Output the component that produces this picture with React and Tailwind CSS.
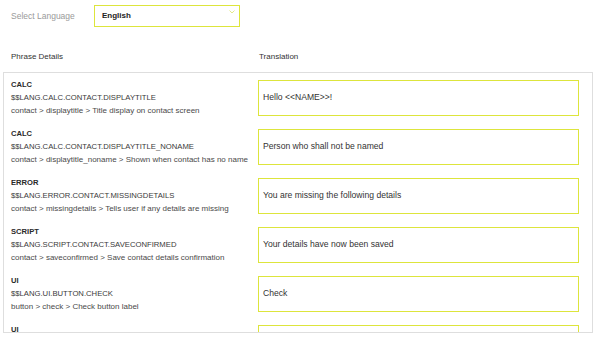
import React from "react";

const phrases = [
  {
    group: "CALC",
    key: "$$LANG.CALC.CONTACT.DISPLAYTITLE",
    path: "contact > displaytitle > Title display on contact screen",
    value: "Hello <<NAME>>!",
  },
  {
    group: "CALC",
    key: "$$LANG.CALC.CONTACT.DISPLAYTITLE_NONAME",
    path: "contact > displaytitle_noname > Shown when contact has no name",
    value: "Person who shall not be named",
  },
  {
    group: "ERROR",
    key: "$$LANG.ERROR.CONTACT.MISSINGDETAILS",
    path: "contact > missingdetails > Tells user if any details are missing",
    value: "You are missing the following details",
  },
  {
    group: "SCRIPT",
    key: "$$LANG.SCRIPT.CONTACT.SAVECONFIRMED",
    path: "contact > saveconfirmed > Save contact details confirmation",
    value: "Your details have now been saved",
  },
  {
    group: "UI",
    key: "$$LANG.UI.BUTTON.CHECK",
    path: "button > check > Check button label",
    value: "Check",
  },
  // last row is cut off by the scroll box, only its label shows
  { group: "UI", key: "", path: "", value: "" },
];

function PhraseRow({ p }) {
  return (
    <div className="flex h-[49px] items-center">
      <div className="w-[247px] leading-[13px]">
        <div className="text-[7.6px] font-bold text-[#2a2a2a]">{p.group}</div>
        <div className="h-[13px] text-[7.7px] text-[#3a3a3a]">{p.key}</div>
        <div className="h-[13px] text-[8px] text-[#4a4a4a]">{p.path}</div>
      </div>
      <div className="flex h-[36px] flex-1 items-center border border-[#dde53c] bg-white px-[4px] text-[8.6px] text-[#333]">
        {p.value}
      </div>
    </div>
  );
}

export default function App() {
  return (
    <div
      className="h-[342px] w-[600px] overflow-hidden bg-white"
      style={{ fontFamily: '"Liberation Sans", Arial, sans-serif' }}
    >
      <div className="flex items-center pl-[11px] pt-[5px]">
        <div className="w-[83px] text-[8.5px] text-[#9a9a9a]">Select Language</div>
        <div className="relative flex h-[22px] w-[146px] items-center border border-[#dde53c] pl-[7px] text-[8px] font-bold text-[#222]">
          English
          <svg
            className="absolute right-[4px] top-[4px]"
            width="6"
            height="4"
            viewBox="0 0 6 4"
          >
            <path d="M0.5 0.5 L3 3 L5.5 0.5" fill="none" stroke="#e3ea8a" strokeWidth="1" />
          </svg>
        </div>
      </div>

      <div className="mt-[24px] flex h-[12px] items-center text-[8px] text-[#333]">
        <div className="w-[258px] pl-[11px]">Phrase Details</div>
        <div className="pl-[1px]">Translation</div>
      </div>

      <div className="ml-[3px] mt-[9px] h-[261px] w-[590px] overflow-hidden border border-[#dedede] pl-[7px] pr-[13px]">
        {phrases.map((p, i) => (
          <PhraseRow key={i} p={p} />
        ))}
      </div>
    </div>
  );
}
